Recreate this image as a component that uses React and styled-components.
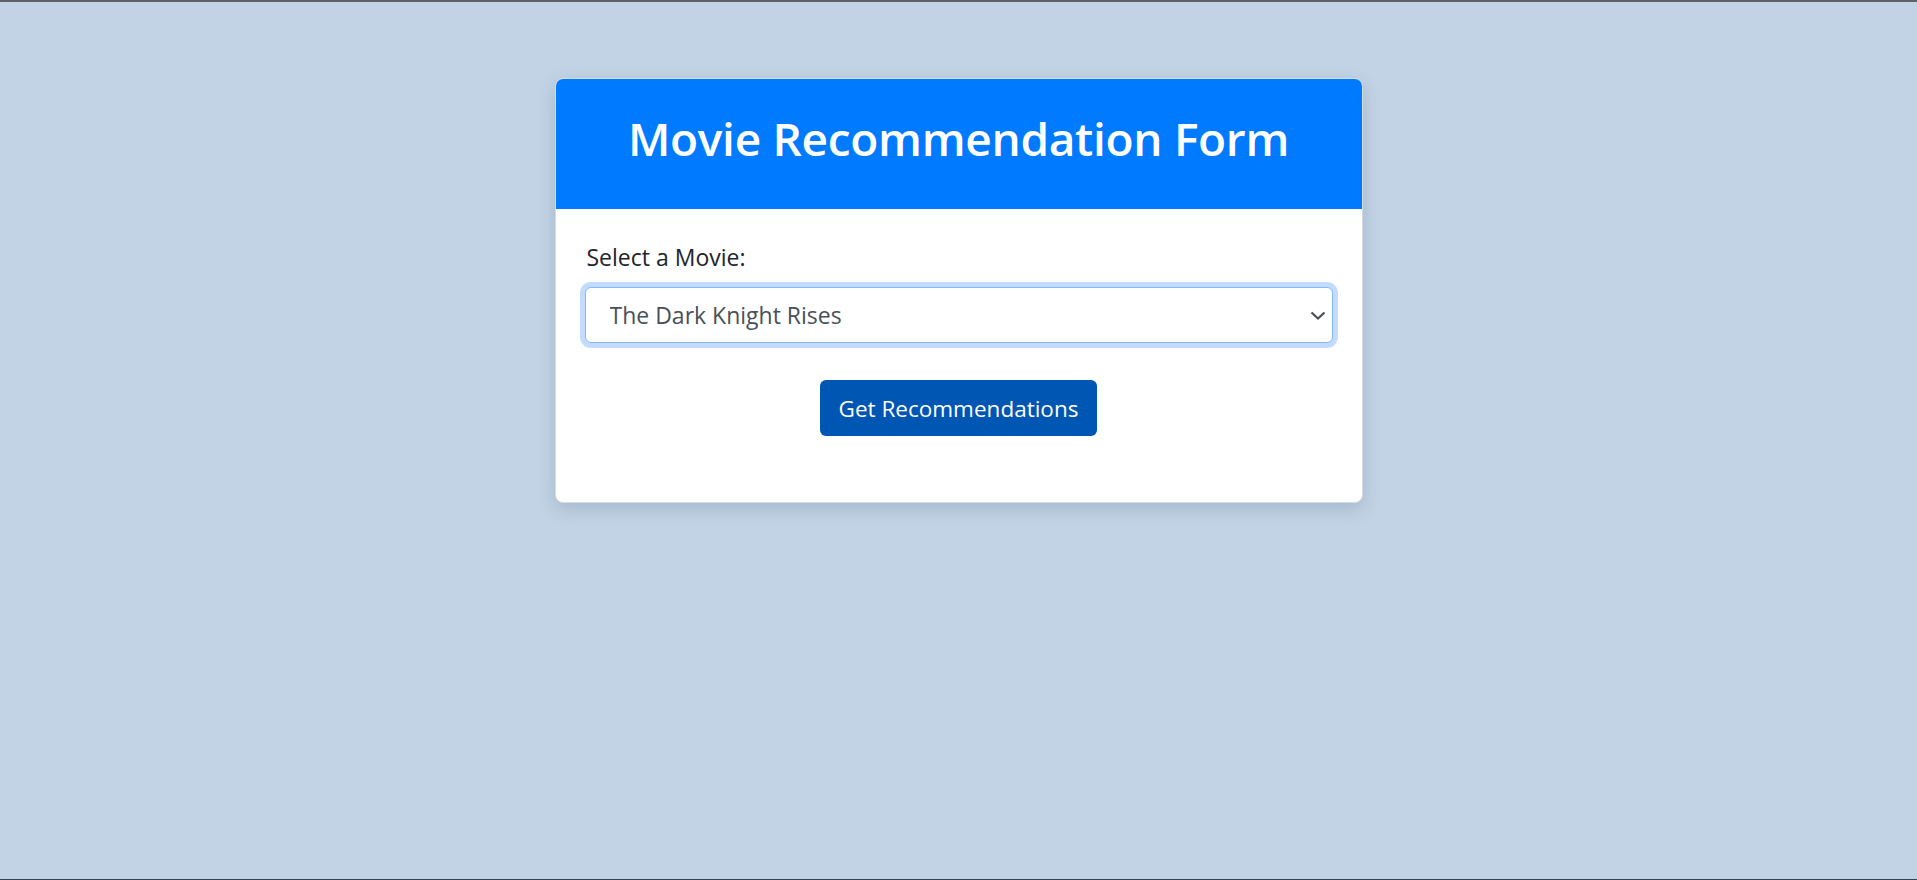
import React, { useState } from 'react'
import styled, { createGlobalStyle } from 'styled-components'

const GlobalStyle = createGlobalStyle`
  html, body {
    margin: 0;
    padding: 0;
  }
  body {
    background: #c2d3e5;
    font-family: 'Open Sans', 'Noto Sans', sans-serif;
  }
`

const movies = [
  'The Dark Knight Rises',
  'Avatar',
  'Inception',
  'Interstellar',
  'The Avengers',
]

function App() {
  const [movie, setMovie] = useState(movies[0])

  return (
    <Page>
      <GlobalStyle />
      <Card>
        <Header>
          <Title>Movie Recommendation Form</Title>
        </Header>
        <Body>
          <Label htmlFor="movie">Select a Movie:</Label>
          <SelectWrap>
            <Select id="movie" value={movie} onChange={e => setMovie(e.target.value)}>
              {movies.map(m => (
                <option key={m} value={m}>{m}</option>
              ))}
            </Select>
            <Chevron width="16" height="9" viewBox="0 0 16 9">
              <path d="M1.5 1.5 L8 7.5 L14.5 1.5" fill="none" stroke="#4a4f55" strokeWidth="2.2" />
            </Chevron>
          </SelectWrap>
          <Actions>
            <Button type="button">Get Recommendations</Button>
          </Actions>
        </Body>
      </Card>
    </Page>
  )
}

export default App

const Page = styled.div`
  min-height: 100vh;
  box-sizing: border-box;
  border-top: 2px solid #5f6166;
  border-bottom: 1px solid #3a4350;
  padding-top: 76px;
`

const Card = styled.div`
  width: 808px;
  margin: 0 auto;
  box-sizing: border-box;
  background: #fff;
  border: 1px solid #d6dbe0;
  border-radius: 8px;
  overflow: hidden;
  box-shadow: 0 6px 18px rgba(40, 60, 90, 0.18);
`

const Header = styled.div`
  height: 130px;
  box-sizing: border-box;
  padding-bottom: 12px;
  background: #007bff;
  display: flex;
  align-items: center;
  justify-content: center;
`

const Title = styled.h1`
  margin: 0;
  color: #fff;
  font-size: 46px;
  font-weight: 600;
  letter-spacing: -0.3px;
`

const Body = styled.div`
  padding: 30px 29px 66px;
`

const Label = styled.label`
  display: block;
  padding-left: 2px;
  font-size: 23px;
  line-height: 36px;
  color: #212529;
  margin-bottom: 12px;
`

const SelectWrap = styled.div`
  position: relative;
`

const Select = styled.select`
  appearance: none;
  width: 100%;
  height: 56px;
  box-sizing: border-box;
  padding: 0 40px 0 24px;
  font-family: inherit;
  font-size: 23px;
  color: #495057;
  background: #fff;
  border: 1.5px solid #86b7fe;
  border-radius: 6px;
  box-shadow: 0 0 0 5px rgba(13, 110, 253, 0.25);
  outline: none;
`

const Chevron = styled.svg`
  position: absolute;
  right: 7px;
  top: 24px;
  pointer-events: none;
`

const Actions = styled.div`
  display: flex;
  justify-content: center;
  margin-top: 37px;
`

const Button = styled.button`
  height: 56px;
  padding: 0 19px;
  background: #0056b3;
  color: #fff;
  border: none;
  border-radius: 6px;
  font-family: inherit;
  font-size: 22.5px;
  cursor: pointer;
`
